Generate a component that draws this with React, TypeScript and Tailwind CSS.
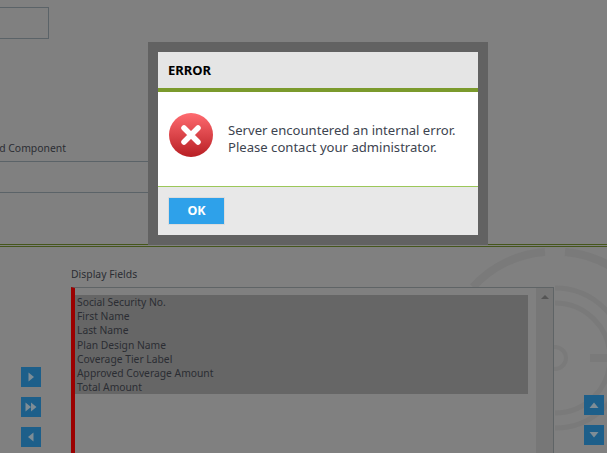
import React from "react";

const font = { fontFamily: '"Noto Sans", "DejaVu Sans", sans-serif' };

function SqBtn({ children }: { children: React.ReactNode }) {
  return (
    <div className="w-5 h-5 bg-[#1d5f8a] flex items-center justify-center">
      <svg width="20" height="20" viewBox="0 0 20 20" fill="#7e8d96">{children}</svg>
    </div>
  );
}

const fields = [
  "Social Security No.",
  "First Name",
  "Last Name",
  "Plan Design Name",
  "Coverage Tier Label",
  "Approved Coverage Amount",
  "Total Amount",
];

export default function App() {
  return (
    <div
      className="relative w-[607px] h-[453px] overflow-hidden bg-[#808080] text-[#2b2d33] flex flex-col"
      style={{ fontFamily: '"Noto Sans", sans-serif' }}
    >
      <svg className="absolute left-[440px] top-[240px]" width="167" height="213" viewBox="440 240 167 213" fill="none" stroke="#7a7a7a">
        <path d="M473 287 A 107 107 0 0 1 545 252" strokeWidth="8" />
        <path d="M565 252 A 107 107 0 0 1 610 266" strokeWidth="8" />
        <path d="M555 288 A 70 70 0 0 1 555 428" strokeWidth="5" />
        <path d="M555 303 A 55 55 0 0 1 555 413" strokeWidth="5" />
        <circle cx="555" cy="358" r="11" strokeWidth="4" />
        <path d="M590 358 H607" strokeWidth="8" />
      </svg>

      <section className="relative h-[244px] shrink-0">
        <div className="w-[49px] h-[32px] mt-[7px] border border-l-0 border-[#5b6368]" />
        <div className="mt-[102px] h-[14px] w-[66px] flex justify-end whitespace-nowrap text-[10.4px] leading-[14px]">
          Associated Component
        </div>
        <div className="mt-[6px] w-[200px] h-[32px] border-y border-[#5b6368]" />
      </section>

      <div className="h-[3px] shrink-0 border-y border-[#45561c]" />

      <section className="relative flex-1 flex min-h-0">
        <div className="w-[71px] shrink-0 pl-[21px] pt-[120px] flex flex-col gap-[10px]">
          <SqBtn><path d="M7.5 5.5 L13 10 L7.5 14.5 Z" /></SqBtn>
          <SqBtn><path d="M4.5 5.5 L10 10 L4.5 14.5 Z M10 5.5 L15.5 10 L10 14.5 Z" /></SqBtn>
          <SqBtn><path d="M12.5 5.5 L7 10 L12.5 14.5 Z" /></SqBtn>
        </div>
        <div className="w-[483px] shrink-0 pt-[20px] flex flex-col">
          <div className="h-[20px] text-[10.4px] leading-[14px]">Display Fields</div>
          <div className="flex-1 flex bg-[#808080] border-t border-r border-[#5f6466] border-l-4 border-l-[#9b0000]">
            <div className="flex-1 pt-[7px] pr-[8px]">
              <ul className="bg-[#666666] pl-[2px] text-[10.3px] leading-[14.2px]">
                {fields.map((f) => (
                  <li key={f}>{f}</li>
                ))}
              </ul>
            </div>
            <div className="w-[17px] bg-[#777777] flex justify-center pt-[7px]">
              <div className="w-0 h-0 border-x-[4px] border-x-transparent border-b-[4px] border-b-[#555555]" />
            </div>
          </div>
        </div>
        <div className="ml-[30px] pt-[148px] flex flex-col gap-[10px]">
          <SqBtn><path d="M5.5 13 L10 7.5 L14.5 13 Z" /></SqBtn>
          <SqBtn><path d="M5.5 7 L10 12.5 L14.5 7 Z" /></SqBtn>
        </div>
      </section>

      <div className="absolute left-[148px] top-[42px] w-[340px] h-[203px] bg-[#626262] p-[10px]">
        <div className="h-full flex flex-col" style={font}>
          <div className="h-[36px] bg-[#e5e5e5] flex items-center pl-[10px] pt-[2px] text-[13px] font-bold text-black">
            ERROR
          </div>
          <div className="h-[4px] bg-[#7b9a2c]" />
          <div className="h-[94px] bg-white flex items-center pl-[11px]">
            <svg width="44" height="44" viewBox="0 0 44 44" className="shrink-0 mb-[8px]">
              <defs>
                <linearGradient id="g" x1="0" y1="0" x2="0" y2="1">
                  <stop offset="0" stopColor="#ff6b70" />
                  <stop offset="1" stopColor="#b81f24" />
                </linearGradient>
              </defs>
              <circle cx="22" cy="22" r="22" fill="url(#g)" />
              <path d="M15 15 L29 29 M29 15 L15 29" stroke="#fff" strokeWidth="5.5" strokeLinecap="round" />
            </svg>
            <p className="ml-[15px] text-[13.1px] leading-[17px] text-[#3d4450]">
              Server encountered an internal error.
              <br />
              Please contact your administrator.
            </p>
          </div>
          <div className="flex-1 bg-[#e8e8e8] border-t border-[#9cc75a] pl-[10px] pt-[10px]">
            <button className="w-[57px] h-[28px] bg-[#2ea1ea] border border-[#dcdcdc] text-white font-bold text-[12.5px] leading-none">
              OK
            </button>
          </div>
        </div>
      </div>
    </div>
  );
}
